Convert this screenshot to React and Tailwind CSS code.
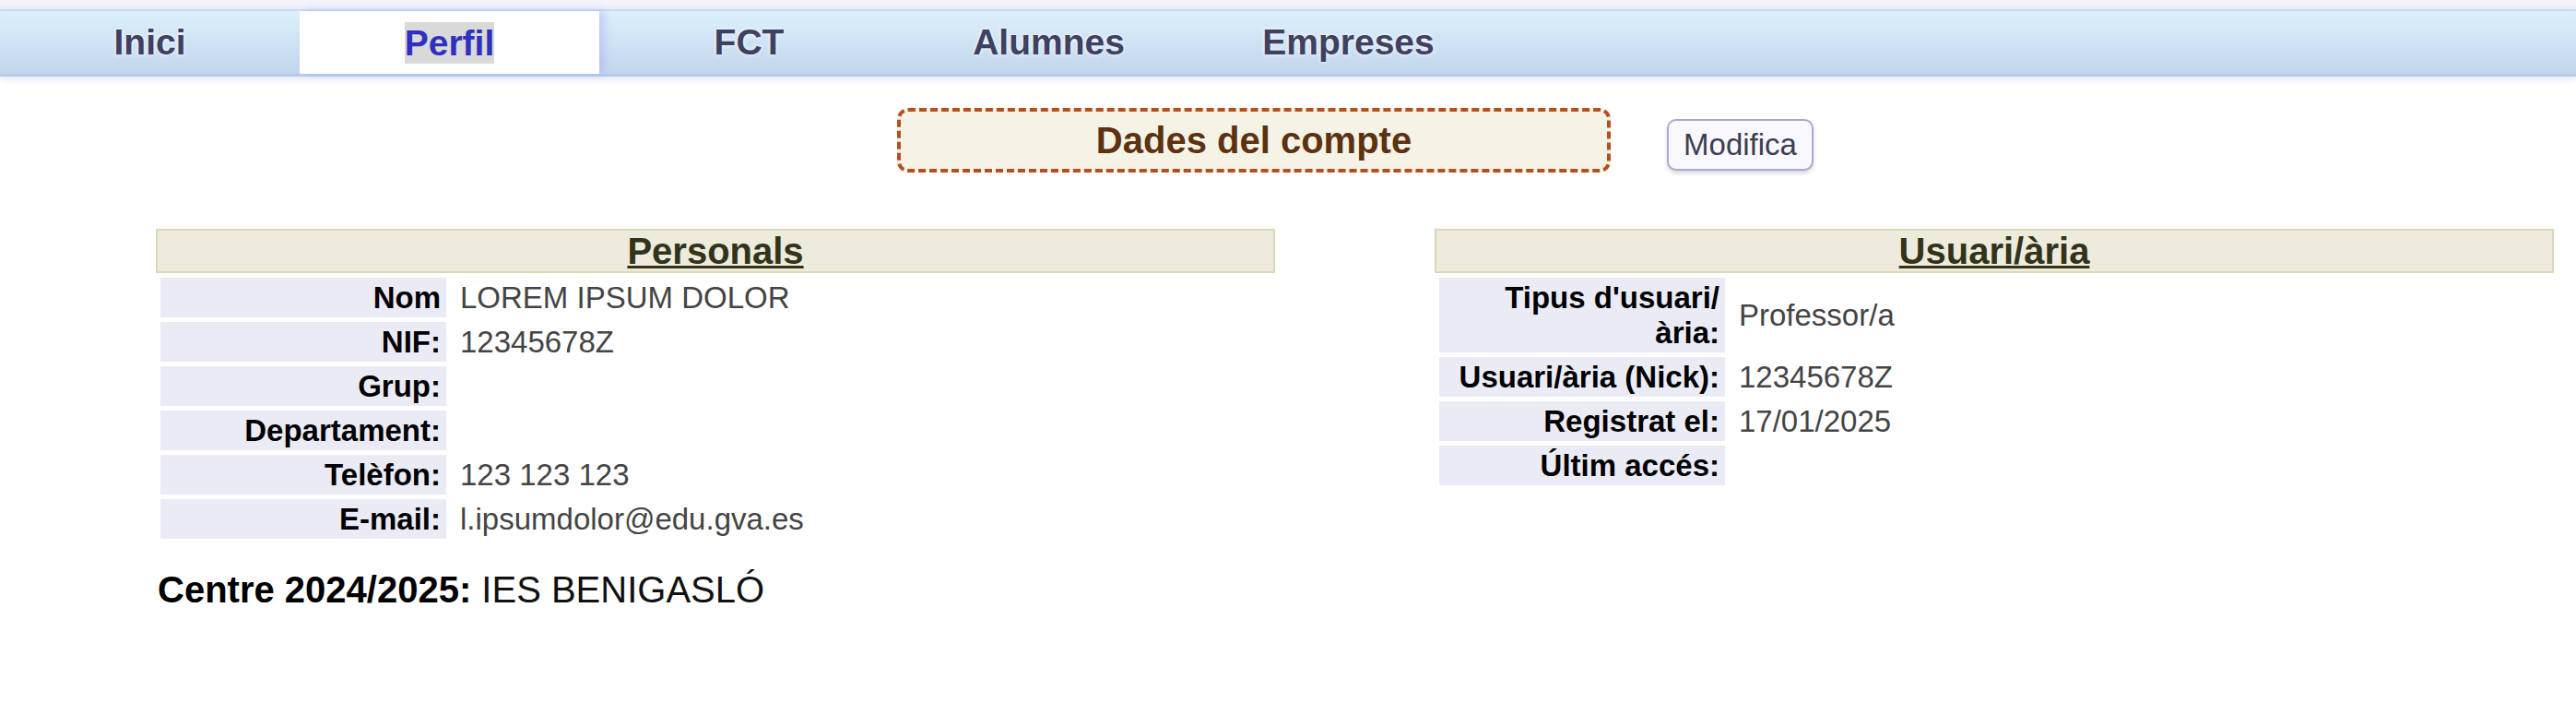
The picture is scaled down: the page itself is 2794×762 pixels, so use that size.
import React from "react";

const tabs = ["Inici", "Perfil", "FCT", "Alumnes", "Empreses"];

function Nav() {
  return (
    <div>
      <div className="h-[10px] bg-[#f3f3fb]" />
      <nav className="flex h-[73px] border-t-2 border-b-[3px] border-t-[#c3dcef] border-b-[#b6cde9] bg-linear-to-b from-[#dcf0fb] to-[#c2d6ed] shadow-[0_2px_8px_rgba(170,170,240,0.35)]">
        {tabs.map((t) =>
          t === "Perfil" ? (
            <div
              key={t}
              className="flex w-[325px] items-center justify-center bg-white shadow-[6px_0_8px_rgba(170,170,250,0.45)] z-10"
            >
              <span className="bg-[#d9d9d9] text-[39px] font-bold leading-[45px] text-[#3030c0]">
                {t}
              </span>
            </div>
          ) : (
            <div
              key={t}
              className="flex w-[325px] items-center justify-center text-[39px] font-bold text-[#404060] [text-shadow:0_0_4px_white]"
            >
              {t}
            </div>
          )
        )}
      </nav>
    </div>
  );
}

function Panel({ title, rows }) {
  return (
    <div className="w-[1214px]">
      <div className="flex h-[48px] items-center justify-center border-2 border-[#dad9b6] bg-[#ecebdc]">
        <span className="text-[40px] font-bold leading-[40px] text-[#33331a] underline decoration-[3px]">
          {title}
        </span>
      </div>
      <table className="w-full border-separate border-spacing-[5px]">
        <tbody>
          {rows.map(([label, value], i) => (
            <tr key={i}>
              <td className="w-[310px] bg-[#ebebf5] py-[2.5px] pr-[6px] text-right align-middle text-[33px] font-bold leading-[38px] text-black">
                {label}
              </td>
              <td className="py-[2.5px] pl-[10px] text-left align-middle text-[33px] leading-[38px] text-[#444]">
                {value}
              </td>
            </tr>
          ))}
        </tbody>
      </table>
    </div>
  );
}

export default function App() {
  const personals = [
    ["Nom", "LOREM IPSUM DOLOR"],
    ["NIF:", "12345678Z"],
    ["Grup:", ""],
    ["Departament:", ""],
    ["Telèfon:", "123 123 123"],
    ["E-mail:", "l.ipsumdolor@edu.gva.es"],
  ];
  const usuari = [
    [
      <>
        Tipus d'usuari/
        <br />
        ària:
      </>,
      "Professor/a",
    ],
    ["Usuari/ària (Nick):", "12345678Z"],
    ["Registrat el:", "17/01/2025"],
    ["Últim accés:", ""],
  ];
  return (
    <div className="h-[762px] w-[2794px] overflow-hidden bg-white font-['Liberation_Sans',Arial,sans-serif]">
      <Nav />
      <div className="mt-[34px] flex items-start pl-[973px]">
        <div className="flex h-[70px] w-[774px] items-center justify-center rounded-[12px] border-4 border-dashed border-[#b5501e] bg-[#f5f3e6]">
          <span className="text-[40px] font-bold text-[#5c3210]">Dades del compte</span>
        </div>
        <button className="ml-[61px] mt-[12px] h-[56px] w-[159px] rounded-[10px] border-2 border-[#a9a9cf] bg-[#f8f8fe] text-[33px] text-[#3d3d52] shadow-[0_3px_4px_rgba(0,0,0,0.15)]">
          Modifica
        </button>
      </div>
      <div className="mt-[61px] flex items-start gap-[173px] pl-[169px]">
        <div>
          <Panel title="Personals" rows={personals} />
          <div className="mt-[28px] pl-[2px] text-[40px] leading-[44px] text-[#111]">
            <span className="font-bold text-black">Centre 2024/2025:</span> IES BENIGASLÓ
          </div>
        </div>
        <Panel title="Usuari/ària" rows={usuari} />
      </div>
    </div>
  );
}
